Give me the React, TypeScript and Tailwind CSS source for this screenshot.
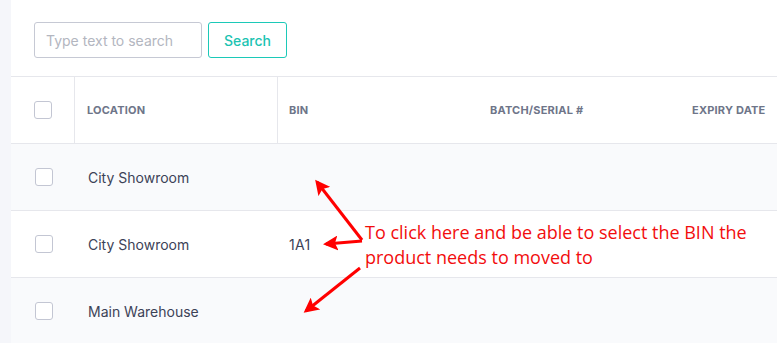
import React from "react";

const rows = [
  { location: "City Showroom", bin: "", shade: true },
  { location: "City Showroom", bin: "1A1", shade: false },
  { location: "Main Warehouse", bin: "", shade: true },
];

function Checkbox() {
  return <div className="w-[18px] h-[18px] rounded-[3px] border border-[#c3c6d3] bg-white" />;
}

export default function App() {
  return (
    <div className="relative flex h-[343px] w-[777px] overflow-hidden bg-[#f5f6fa] font-['Inter',sans-serif]">
      <div className="ml-[11px] flex flex-1 flex-col bg-white">
        <div className="flex h-[76px] shrink-0 items-start gap-[6px] pl-[23px] pt-[22px]">
          <input
            placeholder="Type text to search"
            className="h-[36px] w-[168px] rounded-[3px] border border-[#c6c9d4] px-[11px] text-[14px] text-[#3c4257] placeholder:text-[#b3b6c0] outline-none"
          />
          <button className="h-[36px] w-[79px] rounded-[3px] border border-[#1cc9b8] text-[14px] font-medium text-[#1cc3b2]">
            Search
          </button>
        </div>

        <div className="flex h-[68px] shrink-0 items-center border-y border-[#e6e7ec] text-[11px] font-bold uppercase tracking-[0.2px] text-[#6e7589]">
          <div className="flex h-full w-[64px] items-center justify-center border-r border-[#e6e7ec] pl-[1px]">
            <Checkbox />
          </div>
          <div className="flex h-full w-[203px] items-center border-r border-[#e6e7ec] pl-[12px]">Location</div>
          <div className="flex h-full w-[200px] items-center pl-[11px]">Bin</div>
          <div className="flex h-full w-[202px] items-center pl-[12px]">Batch/Serial #</div>
          <div className="flex h-full flex-1 items-center pl-[12px]">Expiry Date</div>
        </div>

        {rows.map((r, i) => (
          <div
            key={i}
            className={`flex h-[67px] shrink-0 items-center border-b border-[#e6e7ec] text-[14px] text-[#3c4257] ${r.shade ? "bg-[#f9fafc]" : "bg-white"}`}
          >
            <div className="flex w-[64px] justify-center pl-[1px]">
              <Checkbox />
            </div>
            <div className="w-[203px] pl-[13px]">{r.location}</div>
            <div className="w-[200px] pl-[11px] tracking-[0.3px]">{r.bin}</div>
          </div>
        ))}
      </div>

      <svg className="pointer-events-none absolute left-0 top-0" width="777" height="343">
        <defs>
          <marker id="ah" markerWidth="5" markerHeight="5" refX="4" refY="2.5" orient="auto" markerUnits="strokeWidth">
            <path d="M0,0 L5,2.5 L0,5 L1,2.5 Z" fill="#f00" />
          </marker>
        </defs>
        <g stroke="#f00" strokeWidth="3" fill="none">
          <line x1="362" y1="240" x2="317" y2="182" markerEnd="url(#ah)" />
          <line x1="362" y1="241" x2="326" y2="244" markerEnd="url(#ah)" />
          <line x1="360" y1="268" x2="306" y2="311" markerEnd="url(#ah)" />
        </g>
      </svg>

      <div className="pointer-events-none absolute left-[365px] top-[220px] font-['Open_Sans',sans-serif] text-[18px] leading-[25px] text-[#f20d0d]">
        <div>To click here and be able to select the BIN the</div>
        <div>product needs to moved to</div>
      </div>
    </div>
  );
}
